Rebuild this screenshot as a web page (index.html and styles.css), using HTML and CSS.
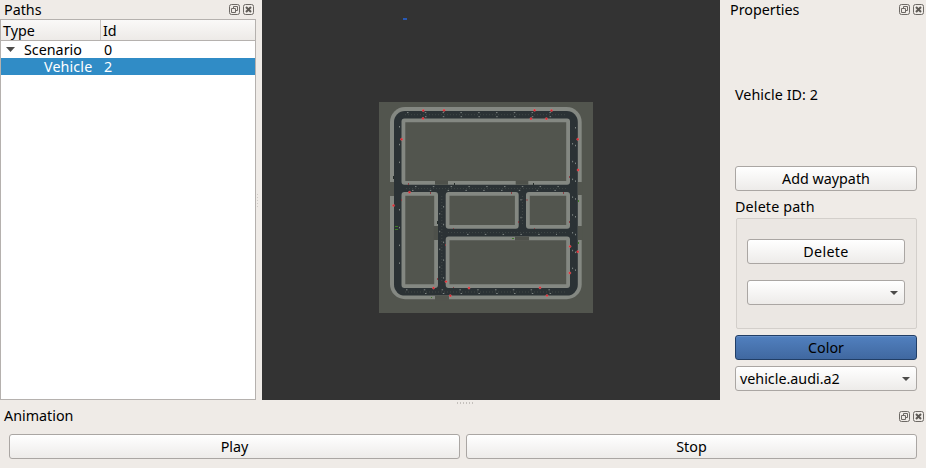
FILE: index.html
```html
<!DOCTYPE html>
<html lang="en">
<head>
<meta charset="utf-8">
<title>Scenario editor</title>
<link rel="stylesheet" href="styles.css">
</head>
<body>
<svg class="defs" width="0" height="0">
  <symbol id="float" viewBox="0 0 11 11"><rect x=".5" y=".5" width="10" height="10" rx="2"/><path d="M4.5 4.5v-2h4v4h-2M2.5 4.5h4v4h-4z"/></symbol>
  <symbol id="close" viewBox="0 0 11 11"><rect x=".5" y=".5" width="10" height="10" rx="2"/><path class="cross" d="M3 3l5 5M8 3l-5 5"/></symbol>
</svg>
<div class="window">
  <div class="workspace">
    <section class="dock paths">
      <header class="title"><span>Paths</span><span class="controls"><svg><use href="#float"/></svg><svg><use href="#close"/></svg></span></header>
      <div class="tree">
        <div class="row head"><span class="type">Type</span><span class="id">Id</span></div>
        <div class="row"><span class="type scenario"><i class="arrow"></i>Scenario</span><span class="id">0</span></div>
        <div class="row selected"><span class="type vehicle">Vehicle</span><span class="id">2</span></div>
      </div>
    </section>
    <div class="grip vertical"></div>
    <main class="canvas">
      <svg width="458" height="400" viewBox="262 0 458 400">
        <rect x="403" y="18" width="4" height="2" fill="#2859b5"/>
        <rect x="379" y="102" width="214" height="211" fill="#52554e"/>
        <rect x="390" y="107" width="191.7" height="192.2" rx="15" fill="#848882"/>
        <rect x="394" y="111" width="183.8" height="184.6" rx="11" fill="#2b3235"/>
        <g fill="#52554e" stroke="#848882" stroke-width="3.8">
          <rect x="403.4" y="120.4" width="164.7" height="62.4" rx="1"/>
          <rect x="403.4" y="193.9" width="32.7" height="92.2" rx="1"/>
          <rect x="447.6" y="193.9" width="69.2" height="32.9" rx="1"/>
          <rect x="527.9" y="193.9" width="40.2" height="32.9" rx="1"/>
          <rect x="447.6" y="238.4" width="120.5" height="47.7" rx="1"/>
        </g>
        <g fill="#52554e">
          <path d="M389 182h5v14h-5zM577.8 182h5v13h-5zM577.8 226h5v14h-5zM435 295.5h14v5h-14z"/>
          <path fill="#4e514b" d="M435 180.5h13v4.2h-13zM515.7 180.5h12.6v4.2h-12.6zM433.8 226h4.2v14h-4.2zM515 236.5h14v4h-14z"/>
        </g>
        <g fill="none" stroke="#58615b" stroke-width=".5" stroke-dasharray="1 2">
          <path d="M405 114.7h160M406 188.6h160M448 232.6h118M405 292h160M441.8 196v86M522.4 196v30"/>
        </g>
        <g fill="none" stroke="#a4aaa5" stroke-width=".7" stroke-dasharray="1.5 16.3">
          <path d="M407 112.6h160M425 116.7h142M415 186.6h150M412 190.4h150M467 234.4h90M425 293.5h140M406 289.8h160"/>
          <path d="M399.5 126v48M399.5 209v65M443.6 206v75M439.7 213v68M572.6 143v130M575.5 127v150M521 199v27"/>
        </g>
        <g fill="#e0252e" stroke="#d8aaa5" stroke-width=".25">
          <circle cx="423.3" cy="110.5" r="1.2"/><circle cx="444" cy="110.3" r="1.2"/><circle cx="423" cy="118.5" r="1.2"/><circle cx="401.6" cy="139.3" r="1.2"/>
          <circle cx="409.5" cy="192.3" r="1.2"/><circle cx="393.5" cy="205.5" r="1.2"/><circle cx="534.6" cy="110.2" r="1.2"/><circle cx="551.5" cy="110.5" r="1.2"/>
          <circle cx="531" cy="118.7" r="1.2"/><circle cx="546.4" cy="118.7" r="1.2"/><circle cx="577.8" cy="139.3" r="1.2"/><circle cx="578.1" cy="170" r="1.2"/>
          <circle cx="446" cy="281.6" r="1.2"/><circle cx="433.5" cy="288" r="1.2"/><circle cx="450.3" cy="295.7" r="1.2"/><circle cx="469" cy="288" r="1.2"/>
          <circle cx="570" cy="246.4" r="1.2"/><circle cx="577.8" cy="251.7" r="1.2"/><circle cx="569.8" cy="273" r="1.2"/><circle cx="540" cy="287.8" r="1.2"/><circle cx="547" cy="295.6" r="1.2"/>
        </g>
        <path fill="#873f43" d="M408 183h1v2h-1zM430 192h1v2h-1zM401 199h1v2h-1zM511 192h1v2h-1zM526.5 199h1v2h-1zM563 192h1v2h-1zM569 176h1v2h-1zM445 244h1v2h-1zM437 278h1v2h-1zM453 228h1v1h-1zM518 221h1v2h-1zM534 228h1v1h-1zM569 221h1v2h-1zM453 287h1v1h-1z"/>
        <path fill="#3e7c27" d="M395 226h3v1h-3zM395 229h3v1h-3zM512 238h2v1h-2zM578 200h1v2h-1zM578 242h1v2h-1zM431 297h1v1h-1z"/>
        <path fill="#252c29" d="M393 176h1v3h-1zM454 183h1v2h-1zM437 221h1v3h-1zM533 183h1v2h-1z"/>
      </svg>
    </main>
    <section class="dock properties">
      <header class="title"><span>Properties</span><span class="controls"><svg><use href="#float"/></svg><svg><use href="#close"/></svg></span></header>
      <div class="form">
        <div class="vehicle-id">Vehicle ID: 2</div>
        <button class="add">Add waypath</button>
        <div class="caption">Delete path</div>
        <div class="group">
          <button class="delete">Delete</button>
          <div class="combo"><span></span><i class="arrow"></i></div>
        </div>
        <button class="color">Color</button>
        <div class="combo"><span>vehicle.audi.a2</span><i class="arrow"></i></div>
      </div>
    </section>
  </div>
  <div class="grip horizontal"></div>
  <section class="dock animation">
    <header class="title"><span>Animation</span><span class="controls"><svg><use href="#float"/></svg><svg><use href="#close"/></svg></span></header>
    <div class="buttons"><button>Play</button><button>Stop</button></div>
  </section>
</div>
</body>
</html>
```

FILE: styles.css
```css
* { box-sizing: border-box; }
body { margin: 0; background: #efebe7; color: #000; font: 14.3px/18px "Noto Sans", "Open Sans", sans-serif; }
.defs { position: absolute; }
.window { width: 926px; height: 468px; display: flex; flex-direction: column; overflow: hidden; }
.workspace { height: 400px; display: flex; }
.title { height: 19px; padding: 0 2px 0 4px; display: flex; justify-content: space-between; align-items: center; }
.controls { display: flex; gap: 3px; }
.controls svg { width: 11px; height: 11px; display: block; fill: none; stroke: #6d6965; stroke-width: 1; }
.cross { stroke: #5d5955; stroke-width: 2; }
.paths { width: 256px; display: flex; flex-direction: column; }
.paths .title { padding-right: 2px; }
.tree { flex: 1; border: 1px solid #b5b1ae; background: #fff; }
.row { height: 17px; display: flex; line-height: 17px; }
.row.head { height: 21px; line-height: 22px; background: linear-gradient(#faf9f8, #edeae7); border-bottom: 1px solid #b5b1ae; }
.type { width: 100px; padding-left: 2px; }
.id { padding-left: 3px; }
.head .type { border-right: 1px solid #cbc7c3; }
.head .id { padding-left: 2px; }
.scenario { display: flex; align-items: center; gap: 9px; padding-left: 5px; }
.vehicle { padding-left: 43px; letter-spacing: .12px; }
.selected { background: #308cc6; color: #fff; }
.arrow { width: 9px; height: 5px; background: #4c4b49; clip-path: polygon(0 0, 100% 0, 50% 100%); }
.grip.vertical { width: 6px; height: 15px; margin-top: 193px; background: radial-gradient(circle, #cfcbc7 .8px, transparent 1px) 0 0 / 3px 3px; background-clip: content-box; padding: 0 2px 0 1px; }
.canvas { width: 458px; background: #333; }
.canvas svg { display: block; }
.properties { width: 206px; }
.properties .title { padding-left: 10px; }
.form { padding: 0 9px 0 15px; display: flex; flex-direction: column; }
.vehicle-id { height: 147px; padding-top: 67px; letter-spacing: .06px; }
button, .combo { height: 25px; border: 1px solid #aaa6a3; border-radius: 3px; background: linear-gradient(#fff, #edebe9); color: #000; font: inherit; line-height: 22px; padding: 0; }
.caption { height: 27px; padding-top: 7px; letter-spacing: .15px; }
.group { height: 111px; margin-left: 1px; padding: 20px 11px 0 10px; border: 1px solid #d3cfcb; border-radius: 2px; background: #ebe7e3; display: flex; flex-direction: column; gap: 16px; }
.group button { letter-spacing: .3px; }
.combo { display: flex; align-items: center; justify-content: space-between; padding: 0 6px 0 4px; }
.combo .arrow { width: 8px; height: 4px; margin-top: 1px; }
.color { margin: 6px 0; border-color: #213e66; background: linear-gradient(#5180bf, #4068a0); box-shadow: inset 0 1px #668fc7; }
.grip.horizontal { width: 18px; height: 6px; margin-left: 456px; background: radial-gradient(circle, #c4c0bc .8px, transparent 1px) 0 1px / 3px 4px; background-clip: content-box; padding-bottom: 2px; }
.animation .title { height: 20px; }
.buttons { margin: 8px 9px 0; display: flex; gap: 6px; }
.buttons button { flex: 1; }
```
